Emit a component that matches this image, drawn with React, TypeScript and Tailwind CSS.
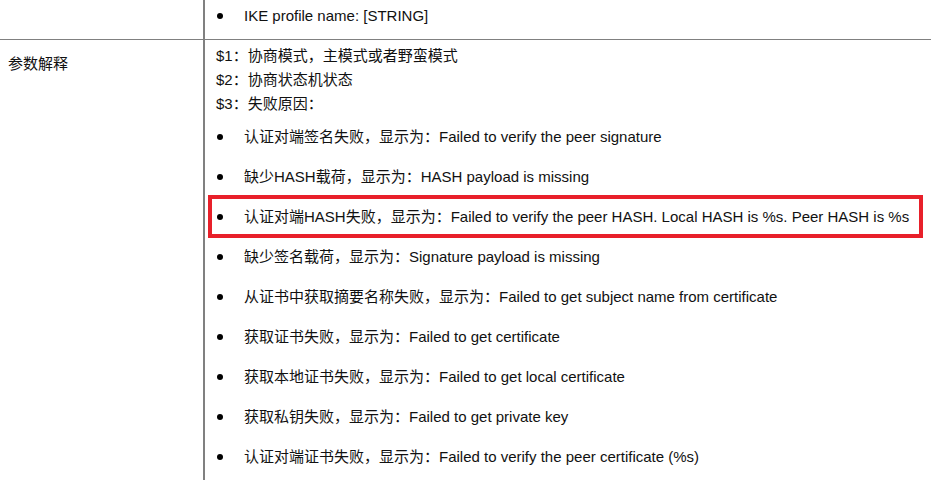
const items = [
  '认证对端签名失败，显示为：Failed to verify the peer signature',
  '缺少HASH载荷，显示为：HASH payload is missing',
  '认证对端HASH失败，显示为：Failed to verify the peer HASH. Local HASH is %s. Peer HASH is %s',
  '缺少签名载荷，显示为：Signature payload is missing',
  '从证书中获取摘要名称失败，显示为：Failed to get subject name from certificate',
  '获取证书失败，显示为：Failed to get certificate',
  '获取本地证书失败，显示为：Failed to get local certificate',
  '获取私钥失败，显示为：Failed to get private key',
  '认证对端证书失败，显示为：Failed to verify the peer certificate (%s)',
]

const font = { fontFamily: '"Liberation Sans", "Noto Sans CJK SC", sans-serif' }

function Bullet({ text, highlight }: { text: string; highlight?: boolean }) {
  return (
    <li className="relative flex h-6 items-center">
      <span className="ml-[1px] h-[6px] w-[6px] shrink-0 rounded-full bg-black" />
      <span className="ml-[21px] whitespace-nowrap">{text}</span>
      {highlight && (
        <span className="pointer-events-none absolute -top-[10px] -bottom-[9px] -left-[8px] w-[715px] border-4 border-[#e8202a]" />
      )}
    </li>
  )
}

export default function App() {
  return (
    <div
      className="h-[480px] w-[931px] overflow-hidden bg-white text-[15px] leading-6 text-[#111]"
      style={font}
    >
      <div className="grid grid-cols-[205px_1fr]">
        <div className="h-[39px] border-r-2 border-[#808080]" />
        <div className="flex h-[39px] items-start pt-[4px] pl-[11px]">
          <ul>
            <Bullet text="IKE profile name: [STRING]" />
          </ul>
        </div>
      </div>
      <div className="h-px bg-[#808080]" />
      <div className="grid h-[460px] grid-cols-[205px_1fr]">
        <div className="border-r-2 border-[#808080] pt-[12px] pl-[8px]">参数解释</div>
        <div className="pt-[4px] pl-[11px]">
          <p>$1：协商模式，主模式或者野蛮模式</p>
          <p>$2：协商状态机状态</p>
          <p>$3：失败原因：</p>
          <ul className="mt-[9px] flex flex-col gap-4">
            {items.map((t, i) => (
              <Bullet key={i} text={t} highlight={i === 2} />
            ))}
          </ul>
        </div>
      </div>
    </div>
  )
}
